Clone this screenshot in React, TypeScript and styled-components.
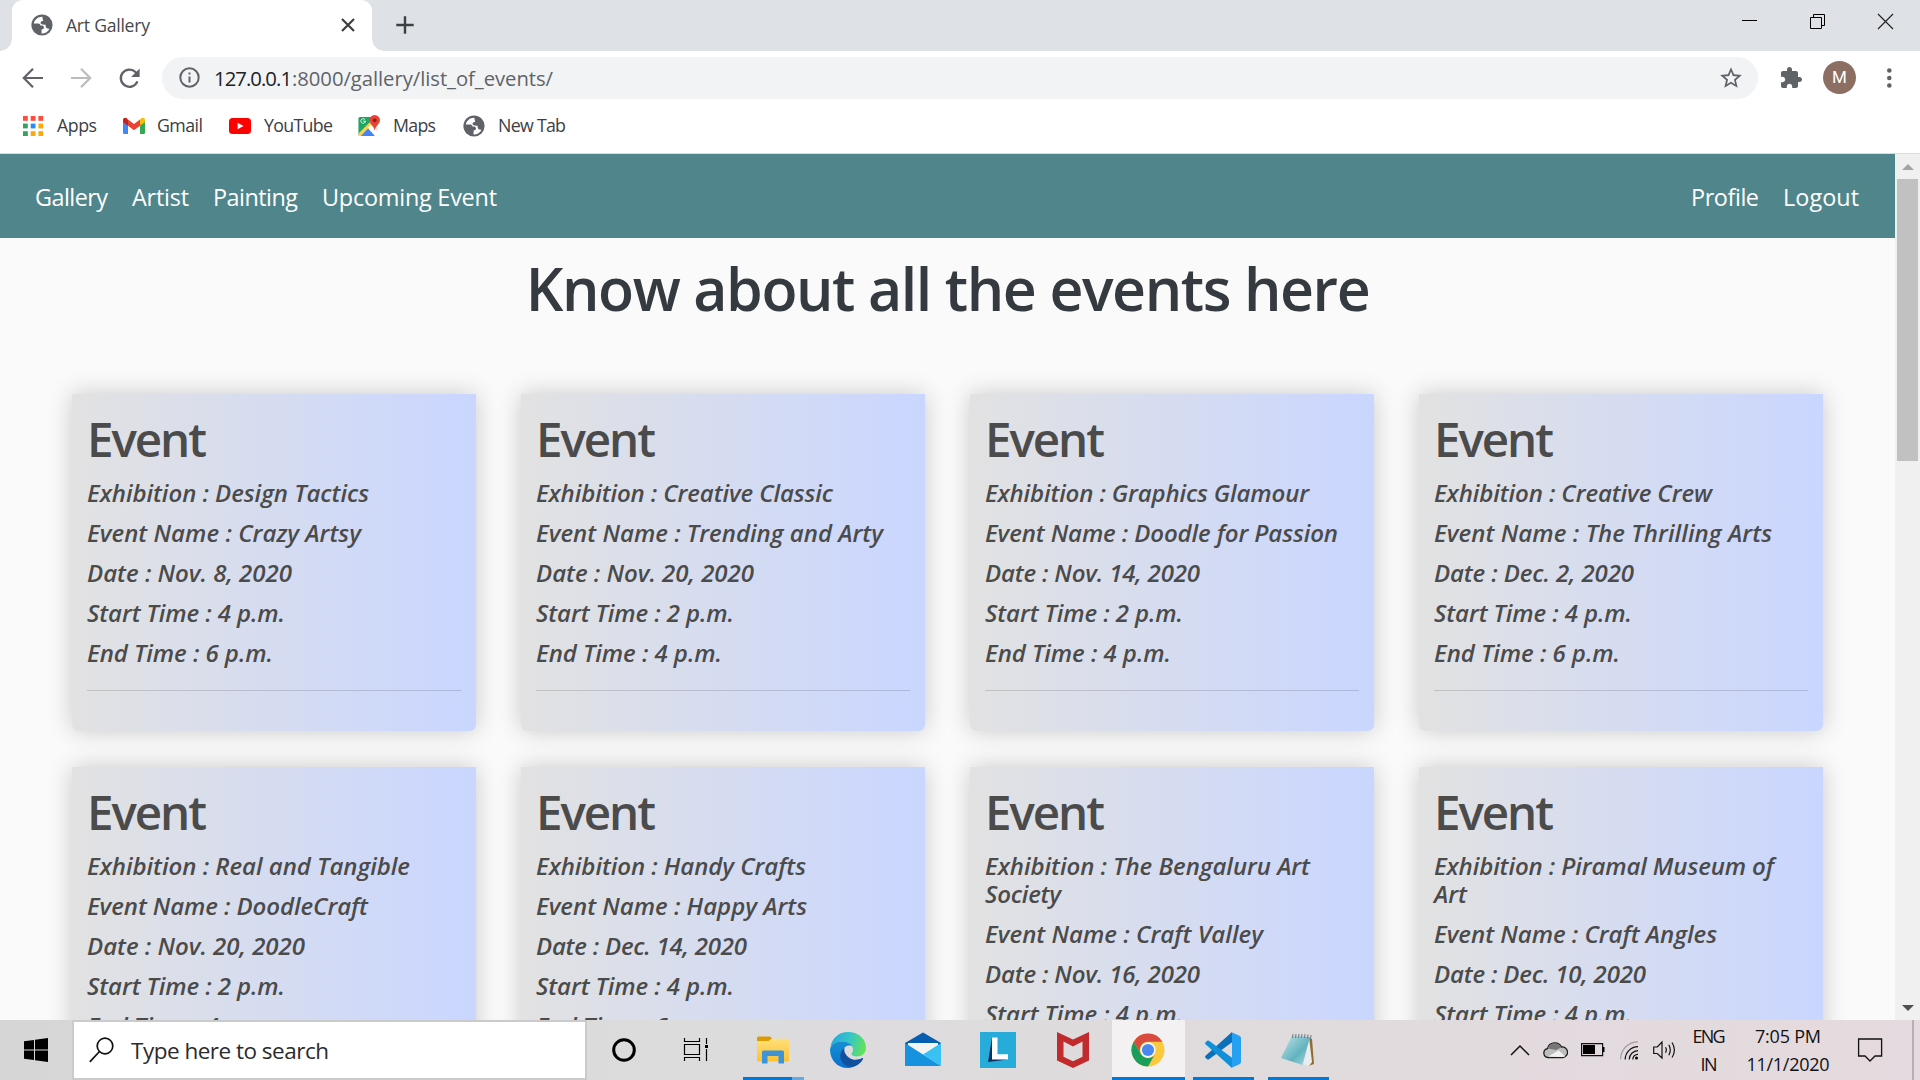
import React, { useLayoutEffect, useRef, useState } from 'react';
import styled, { createGlobalStyle } from 'styled-components';

const GlobalStyle = createGlobalStyle`
  *, *::before, *::after { box-sizing: border-box; }
  body { margin: 0; overflow: hidden; font-family: "Open Sans", "Noto Sans", sans-serif; }
  h1, h2, p { margin: 0; }
  svg { display: block; flex: none; }
`;

/* ---------- text tracked to a column width ---------- */
const FitBox = styled.span<{ $w: number }>`
  display: inline-block;
  width: ${p => p.$w}px;
  white-space: nowrap;
  flex: none;
`;

function Fit({ w, children }: { w: number; children: React.ReactNode }) {
  const ref = useRef<HTMLSpanElement>(null);
  const [spacing, setSpacing] = useState(0);
  useLayoutEffect(() => {
    const el = ref.current;
    if (!el) return;
    const length = (el.textContent || '').length;
    if (length > 1) setSpacing((w - el.getBoundingClientRect().width) / (length - 1));
  }, []);
  return (
    <FitBox $w={w}>
      <span ref={ref} style={{ letterSpacing: spacing }}>{children}</span>
    </FitBox>
  );
}

/* ---------- frame ---------- */
const Screen = styled.div`
  width: 1920px;
  height: 1080px;
  display: flex;
  flex-direction: column;
  overflow: hidden;
  background: #fff;
`;

const TabStrip = styled.div`
  height: 51px;
  flex: none;
  display: flex;
  align-items: center;
  background: #dee1e6;
  padding-left: 12px;
`;

const Tab = styled.div`
  position: relative;
  width: 360px;
  height: 51px;
  display: flex;
  align-items: center;
  padding: 0 17px 1px 19px;
  background: #fff;
  border-radius: 11px 11px 0 0;
  color: #45494d;
  font-size: 17.6px;
  &::before, &::after {
    content: '';
    position: absolute;
    bottom: 0;
    width: 12px;
    height: 12px;
  }
  &::before { left: -12px; background: radial-gradient(circle at 0 0, transparent 11.5px, #fff 12px); }
  &::after { right: -12px; background: radial-gradient(circle at 100% 0, transparent 11.5px, #fff 12px); }
`;

const TabTitle = styled.div`
  flex: 1;
  margin-left: 13px;
  padding-bottom: 1px;
  line-height: 26px;
`;

const NewTabButton = styled.div`
  margin-left: 24px;
  padding-bottom: 1px;
`;

const WindowButtons = styled.div`
  margin-left: auto;
  display: flex;
  height: 43px;
  padding-right: 1px;
  align-self: flex-start;
`;

const WindowButton = styled.div`
  width: 68px;
  display: flex;
  align-items: center;
  justify-content: center;
`;

const Toolbar = styled.div`
  height: 54px;
  flex: none;
  display: flex;
  align-items: center;
  padding: 0 0 1px 21px;
`;

const NavIcon = styled.div`
  width: 24px;
  margin-right: 24px;
`;

const Omnibox = styled.div`
  width: 1596px;
  height: 42px;
  margin-left: -3px;
  display: flex;
  align-items: center;
  padding: 0 14px 0 17px;
  border-radius: 21px;
  background: #f1f3f4;
`;

const Url = styled.div`
  flex: 1;
  margin-left: 14px;
  padding-top: 1px;
  font-size: 20.3px;
  line-height: 30px;
  color: #202124;
`;

const UrlPath = styled.span`
  color: #5f6368;
`;

const Avatar = styled.div`
  width: 33px;
  height: 33px;
  margin: 0 31px 0 20px;
  border-radius: 50%;
  background: #8d6e63;
  color: #fff;
  font: 17px/33px Roboto, sans-serif;
  text-align: center;
`;

const Bookmarks = styled.div`
  height: 49px;
  flex: none;
  display: flex;
  align-items: flex-start;
  padding: 7px 0 0 22px;
  border-bottom: 1px solid #dadce0;
`;

const Bookmark = styled.div<{ $gap: number; $w: number }>`
  width: ${p => p.$w}px;
  display: flex;
  align-items: center;
  gap: ${p => p.$gap}px;
  color: #3c4043;
  font-size: 17.8px;
  line-height: 26px;
  svg { margin-top: 1px; }
`;

const Viewport = styled.div`
  height: 866px;
  flex: none;
  display: flex;
  overflow: hidden;
`;

const Page = styled.main`
  width: 1895px;
  background: #fafafa;
  overflow: hidden;
`;

const SiteNav = styled.nav`
  height: 84px;
  display: flex;
  align-items: center;
  gap: 24px;
  padding: 1px 36px 0 35px;
  background: #50868b;
  color: #fff;
  font-size: 23.4px;
  line-height: 34px;
`;

const Spacer = styled.div`
  flex: 1;
`;

const Heading = styled.h1`
  padding-top: 15px;
  height: 156px;
  color: #343a40;
  font-size: 59px;
  font-weight: 550;
  line-height: 70px;
  text-align: center;
`;

const Grid = styled.section`
  display: grid;
  grid-template-columns: repeat(4, 404px);
  gap: 36px 45px;
  padding-left: 72px;
`;

const Card = styled.article`
  min-height: 337px;
  padding: 16px 15px 15px;
  border-radius: 0 0 6px 6px;
  background: linear-gradient(to right, #e2e2e2, #c9d6ff);
  box-shadow: 0 0 25px rgba(0, 0, 0, 0.2);
  color: #4b4b4b;
`;

const CardTitle = styled.h2`
  margin-bottom: 11px;
  font-size: 47.5px;
  font-weight: 550;
  line-height: 58px;
`;

const CardLine = styled.p`
  margin-bottom: 12px;
  font-size: 24px;
  font-style: italic;
  font-weight: 550;
  line-height: 28px;
`;

const Rule = styled.hr`
  height: 1px;
  margin: 23px 0 0;
  border: 0;
  background: rgba(0, 0, 0, 0.14);
`;

const Scrollbar = styled.div`
  width: 25px;
  display: flex;
  flex-direction: column;
  align-items: center;
  background: #f0f0f0;
`;

const ScrollArrow = styled.div`
  height: 25px;
  display: flex;
  align-items: center;
`;

const ScrollThumb = styled.div`
  width: 21px;
  height: 282px;
  margin-bottom: auto;
  background: #c1c1c1;
`;

/* ---------- taskbar ---------- */
const Taskbar = styled.footer`
  height: 60px;
  flex: none;
  display: flex;
  background: linear-gradient(to right, #d6d6d6, #dcdcdd 35%, #e0dbdd 65%, #e5dadf);
`;

const SearchBox = styled.div`
  width: 515px;
  display: flex;
  align-items: center;
  gap: 17px;
  padding: 2px 0 0 15px;
  border: 2px solid #cbcbcb;
  background: #fff;
  color: #2b2b2b;
  font-size: 22.5px;
  line-height: 32px;
  svg { margin-bottom: 2px; }
`;

const TaskSlot = styled.div<{ $w: number }>`
  width: ${p => p.$w}px;
  display: flex;
  align-items: center;
  justify-content: center;
`;

const AppSlot = styled.div<{ $open?: boolean; $active?: boolean }>`
  width: 73px;
  margin: 0 1px;
  padding-right: 2px;
  display: flex;
  align-items: center;
  justify-content: center;
  background:
    ${p => (p.$open ? 'linear-gradient(#0078d7, #0078d7) 50% 100% / ' + (p.$active ? '73px' : '61px') + ' 3px no-repeat' : 'none')}
    ${p => (p.$active ? ', #f3f1f2' : '')};
`;

const StackedSlot = styled(AppSlot)`
  background: linear-gradient(to right, #0078d7 49px, #68a9e4 49px) 50% 100% / 61px 3px no-repeat;
`;

const Tray = styled.div`
  width: 430px;
  margin-left: auto;
  display: flex;
  align-items: center;
  color: #111;
  font-size: 18px;
`;

const TrayIcon = styled.div<{ $w: number }>`
  width: ${p => p.$w}px;
`;

const TrayText = styled.div<{ $w: number }>`
  width: ${p => p.$w}px;
  display: flex;
  flex-direction: column;
  align-items: center;
  line-height: 28px;
  padding-bottom: 1px;
`;

const DesktopEdge = styled.div`
  width: 2px;
  height: 60px;
  margin-left: auto;
  margin-right: 6px;
  background: #b9afb3;
`;

/* ---------- icons ---------- */
const Globe = () => (
  <svg width="22" height="22" viewBox="0 0 22 22">
    <circle cx="11" cy="11" r="10.6" fill="#5f6368" />
    <path d="M11.6 2.7c-4.2-.3-8 2.6-8.8 6.7l4.5.1c1.4.1 2.2 1 2.1 2.1 1.3-.2 3.4.1 3.6 1.6.2 1.4-1 2.1-2.4 2.2l-.1 4c3.5.2 6.6-1.700 8-4.700-1.600.3-3.500-.3-3.800-2.100l-.1-1.900c-1.700-.1-4.800.2-5-1.700-.2-1.700 1.300-2.100 2.700-2.100-.5-1.700-.900-2.900-.700-4.200z" fill="#fff" />
    <path d="M11.500 2.500l3.700 1.100c-.2 1.500-1 2.500-2.700 2.700z" fill="#5f6368" />
  </svg>
);

const Cross = ({ s, w, c }: { s: number; w: number; c: string }) => (
  <svg width={s} height={s} viewBox={`0 0 ${s} ${s}`} stroke={c} strokeWidth={w}>
    <path d={`M1 1L${s - 1} ${s - 1}M${s - 1} 1L1 ${s - 1}`} />
  </svg>
);

const Arrow = ({ flip, color }: { flip?: boolean; color: string }) => (
  <svg width="24" height="24" viewBox="0 0 24 24" fill="none" stroke={color} strokeWidth="2.2">
    <path d={flip ? 'M2 12h18M12 2.800L21.200 12L12 21.200' : 'M22 12H4M12 2.800L2.800 12L12 21.200'} />
  </svg>
);

const Reload = () => (
  <svg width="24" height="24" viewBox="-1 0 24 24">
    <path d="M19.400 15.400A8.600 8.600 0 1 1 17.700 6.300L19 7.600" fill="none" stroke="#5f6368" strokeWidth="2.300" />
    <path d="M21.600 2.500v8.500h-8.500z" fill="#5f6368" />
  </svg>
);

const Info = () => (
  <svg width="21" height="21" viewBox="0 0 21 21">
    <circle cx="10.500" cy="10.500" r="9.200" fill="none" stroke="#5f6368" strokeWidth="2" />
    <path d="M9.500 9.500h2v6h-2zM9.500 5.500h2v2h-2z" fill="#5f6368" />
  </svg>
);

const Star = () => (
  <svg width="26" height="26" viewBox="0 0 24 24">
    <path fill="#5f6368" d="M22 9.240l-7.190-.62L12 2 9.190 8.630 2 9.240l5.460 4.730L5.820 21 12 17.270 18.180 21l-1.630-7.030L22 9.240zM12 15.400l-3.760 2.270 1-4.280-3.320-2.880 4.380-.38L12 6.100l1.710 4.040 4.380.38-3.320 2.880 1 4.280L12 15.400z" />
  </svg>
);

const Puzzle = () => (
  <svg width="24" height="24" viewBox="0 0 24 24">
    <path fill="#5f6368" d="M20.500 11H19V7c0-1.100-.9-2-2-2h-4V3.500C13 2.120 11.880 1 10.500 1S8 2.120 8 3.500V5H4c-1.100 0-1.990.9-1.990 2v3.800H3.500c1.490 0 2.700 1.210 2.700 2.700s-1.210 2.700-2.700 2.700H2V20c0 1.100.9 2 2 2h3.800v-1.500c0-1.490 1.210-2.700 2.700-2.700 1.490 0 2.700 1.210 2.700 2.700V22H17c1.100 0 2-.9 2-2v-4h1.500c1.380 0 2.500-1.120 2.500-2.500S21.880 11 20.500 11z" />
  </svg>
);

const AppsGrid = () => {
  const colors = ['#ff4c3b', '#ff4c3b', '#ff4c3b', '#32a35b', '#2b8cf5', '#fba90a', '#32a35b', '#fba90a', '#fba90a'];
  return (
    <svg width="22" height="22" viewBox="0 0 22 22">
      {colors.map((c, i) => <rect key={i} x={1 + (i % 3) * 7.700} y={1 + Math.floor(i / 3) * 7.600} width="4.800" height="4.800" fill={c} />)}
    </svg>
  );
};

const Gmail = () => (
  <svg width="22" height="22" viewBox="0 0 22 22">
    <path d="M0 6v11.500c0 1 .6 1.500 1.500 1.500H5V9.500z" fill="#4285f4" />
    <path d="M22 6v11.500c0 1-.6 1.500-1.500 1.500H17V9.500z" fill="#34a853" />
    <path d="M17 4.500v6.200l5-3.700V5c0-2.300-2.400-2.900-3.800-1.700z" fill="#fbbc04" />
    <path d="M0 5v2l5 3.700V4.500L3.800 3.300C2.400 2.100 0 2.700 0 5z" fill="#c5221f" />
    <path d="M5 4.500v6.200l6 4.600 6-4.600V4.500L11 9z" fill="#ea4335" />
  </svg>
);

const YouTube = () => (
  <svg width="22" height="22" viewBox="0 0 22 22">
    <rect y="3" width="22" height="16" rx="3.500" fill="#f00" />
    <path d="M8.600 7.700l6 3.300-6 3.300z" fill="#fff" />
  </svg>
);

const Maps = () => (
  <svg width="23" height="24" viewBox="0 0 23 24">
    <clipPath id="mapSheet"><rect x=".5" y="3" width="19" height="19" rx="1.500" /></clipPath>
    <g clipPath="url(#mapSheet)">
      <rect width="20" height="23" fill="#e8eaed" />
      <path d="M0 2h16l-4 8L0 22z" fill="#1fa463" />
      <path d="M0 20L14 6l3 4L4 23H0z" fill="#ffd04b" />
      <path d="M2 23l8-8.500 8 8.500z" fill="#4285f4" />
      <path d="M10 13.500l3-3 7 8V23h-2z" fill="#fff" />
    </g>
    <path d="M7.500 7.200H5.200M7 5.600a2.300 2.300 0 1 0 .5 1.600" stroke="#e8f5ec" strokeWidth="1" fill="none" />
    <path d="M16.700 1a5.300 5.300 0 0 0-5.300 5.300c0 4 4.300 5 5.300 10.200 1-5.200 5.300-6.200 5.300-10.200A5.300 5.300 0 0 0 16.700 1z" fill="#ea4335" />
    <circle cx="16.700" cy="6.300" r="1.900" fill="#8c1f17" />
  </svg>
);

const Triangle = ({ down }: { down?: boolean }) => (
  <svg width="12" height="6" viewBox="0 0 12 6">
    <path d={down ? 'M0 0h12l-6 6z' : 'M0 6h12L6 0z'} fill={down ? '#505050' : '#a3a3a3'} />
  </svg>
);

const WindowsLogo = () => (
  <svg width="24" height="24" viewBox="0 0 24 24">
    <path d="M0 3.300L10 1.900V11.400H0zM11 1.800L24 0v11.400H11zM0 12.500h10v9.600L0 20.700zM11 12.500h13V24l-13-1.800z" />
  </svg>
);

const SearchGlass = () => (
  <svg width="25" height="26" viewBox="0 0 25 26" fill="none" stroke="#111" strokeWidth="1.700">
    <circle cx="16" cy="9" r="7.800" />
    <path d="M10.500 14.500L.8 24.800" />
  </svg>
);

const TaskView = () => (
  <svg width="26" height="24" viewBox="0 0 26 24" fill="none" stroke="#000" strokeWidth="1.200">
    <path d="M1.500 0v3.500h15V0M1.500 6.500h15v10h-15zM1.500 23v-3.500h15V23M23.500 0v6M23.500 11v12" />
    <path d="M22 7h3v3h-3z" fill="#000" stroke="none" />
  </svg>
);

const Explorer = () => (
  <svg width="32" height="28" viewBox="0 0 32 28">
    <defs>
      <linearGradient id="folder" x2="0" y2="1"><stop stopColor="#ffe07a" /><stop offset="1" stopColor="#fbc22f" /></linearGradient>
    </defs>
    <path d="M0 2q0-1.500 1.500-1.500H13l2 2-3 4H0z" fill="#dd9a05" />
    <path d="M0 5h11.500l3-2.200H31q1 0 1 1.200v20q0 1.500-1.500 1.500h-29Q0 25.500 0 24z" fill="url(#folder)" />
    <path d="M5 27.500V16q0-1.500 1.500-1.500h19q1.500 0 1.500 1.500v11.500h-5.500V20h-11v7.500z" fill="#3c93d8" />
  </svg>
);

const Edge = () => (
  <svg width="36" height="36" viewBox="0 0 36 36">
    <defs>
      <linearGradient id="edgeTop" x1="0" y1=".4" x2="1" y2=".6"><stop stopColor="#2aa5dc" /><stop offset=".5" stopColor="#36c6c8" /><stop offset="1" stopColor="#66e54f" /></linearGradient>
      <linearGradient id="edgeLeft" x2="0" y2="1"><stop stopColor="#168fd0" /><stop offset="1" stopColor="#0872ce" /></linearGradient>
    </defs>
    <path d="M.5 15C2 6 9 0 18 0c11 0 18 7.500 18 15.500 0 6-4.500 9-9 9-3 0-5.500-1-5.500-2.500 0-1 1.500-1.500 1.500-4.500C23 13 18 9.500 12.500 9.500 7 9.500 2.500 12 .5 15z" fill="url(#edgeTop)" />
    <path d="M0 17.500C1 12 6.500 9.500 12 9.500c5 0 9 2 10.500 5-2-1.500-7-1.500-8.500 2.500-2.500 7 2 16 11 17-2.500 1.500-5 2-7.500 2C7.500 36 0 28 0 17.500z" fill="url(#edgeLeft)" />
    <path d="M14.500 16c-5 3.500-5.500 10-2 14.500 3.500 4.300 9 5 13 3.500 3.500-1.500 6-4 7.500-7 .3-1-.5-1.300-1.300-.7-4 2-9 2-12.200-.3-3.500-2.500-6-6-5-10z" fill="#10509f" />
  </svg>
);

const Mail = () => (
  <svg width="36" height="36" viewBox="0 0 36 36">
    <path d="M0 11L18 .5 36 11v10H0z" fill="#075db0" />
    <path d="M3 11h30v3L18 26 3 14z" fill="#f4f4f4" />
    <path d="M0 11l18 11.500L36 34H0z" fill="#1593df" />
    <path d="M36 11L18 22.500 36 34z" fill="#38c1f2" />
  </svg>
);

const Lenovo = () => (
  <svg width="36" height="36" viewBox="0 0 36 36">
    <path d="M0 0h36v36H0z" fill="#27acd9" />
    <path d="M12 5.500L8 30l20-2.500L17 24z" fill="#0b2f60" />
    <path d="M12 5.500h5.500v16.700H28v5.300H12z" fill="#fff" />
  </svg>
);

const McAfee = () => (
  <svg width="32" height="36" viewBox="0 0 32 36">
    <path d="M0 0l16 7.500L32 0v28.500L16 36 0 28.500zM6.500 9.500v15.200L16 29.200l9.500-4.500V9.500L16 14.500z" fill="#c12b2e" fillRule="evenodd" />
  </svg>
);

const Chrome = () => (
  <svg width="34" height="34" viewBox="0 0 34 34">
    <circle cx="17" cy="17" r="16.500" fill="#fdc93c" />
    <path d="M2.700 8.750A16.500 16.500 0 0 1 31.300 8.750H17A8.250 8.250 0 0 0 9.850 21.100z" fill="#d94a3f" />
    <path d="M2.700 8.750A16.500 16.500 0 0 0 17 33.500l7.150-12.400a8.250 8.250 0 0 1-14.300 0z" fill="#1b9e5b" />
    <circle cx="17" cy="17" r="7.700" fill="#f5f5f5" />
    <circle cx="17" cy="17" r="6.100" fill="#4a88f0" />
  </svg>
);

const VSCode = () => (
  <svg width="36" height="36" viewBox="0 0 36 36">
    <path d="M27 0v10.200L4 27.300q-1 .6-1.800 0L.5 25.700q-.8-1 0-2z" fill="#0a70bb" />
    <path d="M27 36V25.800L4 8.700q-1-.6-1.800 0L.5 10.300q-.8 1 0 2z" fill="#118fd8" />
    <path d="M26 0l8.500 3.800q1.500.7 1.500 2.200v24q0 1.500-1.500 2.200L26 36q1-.5 1-2V2q0-1.500-1-2z" fill="#26a0f0" />
  </svg>
);

const Notepad = () => (
  <svg width="36" height="34" viewBox="0 0 36 34">
    <defs>
      <linearGradient id="pad" x2="1" y2="1"><stop stopColor="#bfe4e8" /><stop offset=".6" stopColor="#62b3bf" /><stop offset="1" stopColor="#a9dbe0" /></linearGradient>
    </defs>
    <path d="M29 5l3 1 2 25-6 2z" fill="#916c32" />
    <path d="M29 4L23 31l6 2 3-4z" fill="#e9eded" />
    <path d="M12 3l18 1-7.500 28L1 25z" fill="url(#pad)" />
    <path d="M13 1l-.5 4M16 1l-.5 4M19 1l-.5 4M22 1l-.5 4M25 1l-.5 4M28 1.500l-.5 4M31 2l-.5 4" stroke="#71797a" />
  </svg>
);

const CloudIcon = () => (
  <svg width="25" height="18" viewBox="0 0 25 18">
    <path d="M5 16.500A4.500 4.500 0 0 1 4.500 7.600 7.500 7.500 0 0 1 18.500 6a5.300 5.300 0 0 1 1.500 10.500z" fill="#bdbdbd" stroke="#1c1c1c" strokeWidth="1.300" />
    <path d="M4.800 7.500a7 7 0 0 1 13.200-1l-5 2.500z" fill="#777" />
    <path d="M5 15.800l10.500-6.500 6.500 6q-1 .6-2 .6z" fill="#f1f1f1" />
  </svg>
);

const Battery = () => (
  <svg width="24" height="14" viewBox="0 0 24 14">
    <path d="M.6.6h21v12H.6z" fill="none" stroke="#111" strokeWidth="1.200" />
    <path d="M2 2h12v9H2zM22 4h1.500v5H22z" fill="#000" />
  </svg>
);

const Wifi = () => (
  <svg width="19" height="19" viewBox="0 0 19 19" fill="none" stroke="#111" strokeWidth="1.200">
    <path d="M.6 18.500A17.500 17.500 0 0 1 18 .8" stroke="#a39ca0" />
    <path d="M5.200 18.500A13 13 0 0 1 18 5.600M9.200 18.500a9 9 0 0 1 8.800-8.900M12.800 18.500a5 5 0 0 1 5.200-5.200" />
    <circle cx="16.500" cy="17" r="1.500" fill="#000" stroke="none" />
  </svg>
);

const Speaker = () => (
  <svg width="24" height="20" viewBox="0 0 24 20" fill="none" stroke="#111" strokeWidth="1.200">
    <path d="M.7 7h3.600L9 2v16l-4.700-4.500H.7zM12.500 7.200q1.700 2.800 0 5.600M15.800 4.800q3 5.200 0 10.400M19 2.500q4.800 7.500 0 15" />
  </svg>
);

/* ---------- data ---------- */
type Line = [string, number];
const START = (h: number): Line => [`Start Time : ${h} p.m.`, 198];
const END = (h: number): Line => [`End Time : ${h} p.m.`, 186];

const events: Line[][] = [
  [['Exhibition : Design Tactics', 282], ['Event Name : Crazy Artsy', 274], ['Date : Nov. 8, 2020', 205], START(4), END(6)],
  [['Exhibition : Creative Classic', 297], ['Event Name : Trending and Arty', 347], ['Date : Nov. 20, 2020', 218], START(2), END(4)],
  [['Exhibition : Graphics Glamour', 324], ['Event Name : Doodle for Passion', 353], ['Date : Nov. 14, 2020', 215], START(2), END(4)],
  [['Exhibition : Creative Crew', 278], ['Event Name : The Thrilling Arts', 338], ['Date : Dec. 2, 2020', 200], START(4), END(6)],
  [['Exhibition : Real and Tangible', 323], ['Event Name : DoodleCraft', 281], ['Date : Nov. 20, 2020', 218], START(2), END(4)],
  [['Exhibition : Handy Crafts', 270], ['Event Name : Happy Arts', 271], ['Date : Dec. 14, 2020', 211], START(4), END(6)],
  [['Exhibition : The Bengaluru Art|Society', 325], ['Event Name : Craft Valley', 278], ['Date : Nov. 16, 2020', 215], START(4), END(6)],
  [['Exhibition : Piramal Museum of|Art', 340], ['Event Name : Craft Angles', 283], ['Date : Dec. 10, 2020', 212], START(4), END(6)],
];

function EventCard({ lines }: { lines: Line[] }) {
  return (
    <Card>
      <CardTitle><Fit w={120}>Event</Fit></CardTitle>
      {lines.map(([text, width], i) => {
        const [first, rest] = text.split('|');
        return (
          <CardLine key={i}>
            <Fit w={width}>{first}</Fit>
            {rest && <><br /><Fit w={rest === 'Art' ? 33 : 76}>{rest}</Fit></>}
          </CardLine>
        );
      })}
      <Rule />
    </Card>
  );
}

export default function App() {
  return (
    <Screen>
      <GlobalStyle />
      <TabStrip>
        <Tab>
          <Globe />
          <TabTitle><Fit w={84}>Art Gallery</Fit></TabTitle>
          <Cross s={14} w={2.2} c="#3c4043" />
        </Tab>
        <NewTabButton>
          <svg width="18" height="18" viewBox="0 0 18 18" stroke="#3c4043" strokeWidth="2.400"><path d="M9 .3v17.400M.3 9h17.400" /></svg>
        </NewTabButton>
        <WindowButtons>
          <WindowButton><svg width="15" height="15" viewBox="0 0 15 15"><path d="M0 6h15v1H0z" /></svg></WindowButton>
          <WindowButton><svg width="15" height="15" viewBox="0 0 15 15" fill="none" stroke="#000"><path d="M.5 3.500h11v11H.5zM3.500 3.500v-3h11v11h-3" /></svg></WindowButton>
          <WindowButton><Cross s={17} w={1.2} c="#222" /></WindowButton>
        </WindowButtons>
      </TabStrip>

      <Toolbar>
        <NavIcon><Arrow color="#5f6368" /></NavIcon>
        <NavIcon><Arrow flip color="#babcbe" /></NavIcon>
        <NavIcon><Reload /></NavIcon>
        <Omnibox>
          <Info />
          <Url><Fit w={78}>127.0.0.1</Fit><UrlPath><Fit w={261}>:8000/gallery/list_of_events/</Fit></UrlPath></Url>
          <Star />
        </Omnibox>
        <Spacer />
        <Puzzle />
        <Avatar>M</Avatar>
        <svg width="33" height="20" viewBox="0 0 33 20" fill="#5f6368"><circle cx="2.300" cy="2.500" r="2.300" /><circle cx="2.300" cy="10" r="2.300" /><circle cx="2.300" cy="17.500" r="2.300" /></svg>
      </Toolbar>

      <Bookmarks>
        <Bookmark $w={101} $gap={13}><AppsGrid /><Fit w={40}>Apps</Fit></Bookmark>
        <Bookmark $w={106} $gap={12}><Gmail /><Fit w={46}>Gmail</Fit></Bookmark>
        <Bookmark $w={129} $gap={13}><YouTube /><Fit w={69}>YouTube</Fit></Bookmark>
        <Bookmark $w={105} $gap={12}><Maps /><Fit w={43}>Maps</Fit></Bookmark>
        <Bookmark $w={110} $gap={13}><Globe /><Fit w={68}>New Tab</Fit></Bookmark>
      </Bookmarks>

      <Viewport>
        <Page>
          <SiteNav>
            <Fit w={73}>Gallery</Fit>
            <Fit w={57}>Artist</Fit>
            <Fit w={85}>Painting</Fit>
            <Fit w={175}>Upcoming Event</Fit>
            <Spacer />
            <Fit w={68}>Profile</Fit>
            <Fit w={76}>Logout</Fit>
          </SiteNav>
          <Heading><Fit w={845}>Know about all the events here</Fit></Heading>
          <Grid>{events.map((lines, i) => <EventCard key={i} lines={lines} />)}</Grid>
        </Page>
        <Scrollbar>
          <ScrollArrow><Triangle /></ScrollArrow>
          <ScrollThumb />
          <ScrollArrow><Triangle down /></ScrollArrow>
        </Scrollbar>
      </Viewport>

      <Taskbar>
        <TaskSlot $w={72}><WindowsLogo /></TaskSlot>
        <SearchBox><SearchGlass /><Fit w={198}>Type here to search</Fit></SearchBox>
        <TaskSlot $w={74}><svg width="26" height="26" viewBox="0 0 26 26"><circle cx="13" cy="13" r="10.300" fill="none" stroke="#000" strokeWidth="3" /></svg></TaskSlot>
        <TaskSlot $w={70}><TaskView /></TaskSlot>
        <TaskSlot $w={5} />
        <StackedSlot><Explorer /></StackedSlot>
        <AppSlot><Edge /></AppSlot>
        <AppSlot><Mail /></AppSlot>
        <AppSlot><Lenovo /></AppSlot>
        <AppSlot><McAfee /></AppSlot>
        <AppSlot $open $active><Chrome /></AppSlot>
        <AppSlot $open><VSCode /></AppSlot>
        <AppSlot $open><Notepad /></AppSlot>
        <Tray>
          <TrayIcon $w={33}><svg width="40" height="12" viewBox="0 0 40 12" fill="none" stroke="#111" strokeWidth="1.500"><path d="M21 11l9-9 9 9" /></svg></TrayIcon>
          <TrayIcon $w={20} />
          <TrayIcon $w={38}><CloudIcon /></TrayIcon>
          <TrayIcon $w={39}><Battery /></TrayIcon>
          <TrayIcon $w={33}><Wifi /></TrayIcon>
          <TrayIcon $w={24}><Speaker /></TrayIcon>
          <TrayText $w={64}><Fit w={33}>ENG</Fit><Fit w={17}>IN</Fit></TrayText>
          <TrayText $w={94}><Fit w={66}>7:05 PM</Fit><Fit w={83}>11/1/2020</Fit></TrayText>
          <TrayIcon $w={45}><svg width="48" height="26" viewBox="0 0 48 26" fill="none" stroke="#111" strokeWidth="1.300"><path d="M23.600 2h23v17h-6.600l-5 5-5-5h-6.400z" /></svg></TrayIcon>
          <DesktopEdge />
        </Tray>
      </Taskbar>
    </Screen>
  );
}
